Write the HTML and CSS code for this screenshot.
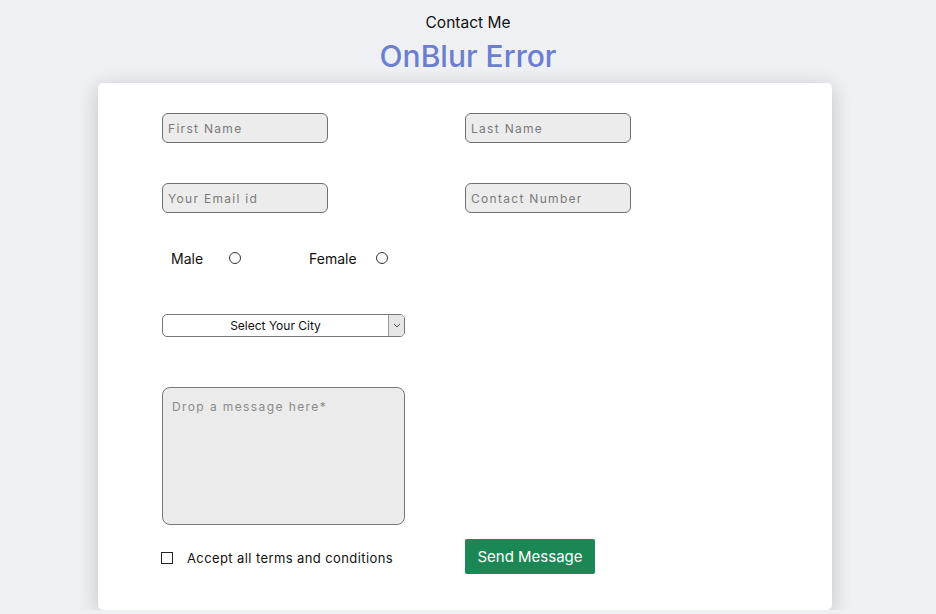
FILE: index.html
```html
<!DOCTYPE html>
<html>
<head>
<meta charset="utf-8">
<link rel="stylesheet" href="styles.css">
</head>
<body>
<header class="head">
  <p class="sub">Contact Me</p>
  <h1 class="title">OnBlur Error</h1>
</header>
<main class="card">
  <div class="row">
    <input class="field" type="text" placeholder="First Name">
    <input class="field" type="text" placeholder="Last Name">
  </div>
  <div class="row row2">
    <input class="field" type="text" placeholder="Your Email id">
    <input class="field" type="text" placeholder="Contact Number">
  </div>
  <div class="gender">
    <label class="opt opt-male">Male <span class="radio"></span></label>
    <label class="opt opt-female">Female <span class="radio"></span></label>
  </div>
  <div class="select">
    <span class="select-text">Select Your City</span>
    <span class="select-arrow">
      <svg width="8" height="5" viewBox="0 0 8 5"><path d="M1 1 L4 4 L7 1" fill="none" stroke="#555" stroke-width="1"/></svg>
    </span>
  </div>
  <textarea class="msg" placeholder="Drop a message here*"></textarea>
  <div class="bottom">
    <label class="terms"><span class="check"></span>Accept all terms and conditions</label>
    <button class="send">Send Message</button>
  </div>
</main>
</body>
</html>
```
FILE: styles.css
```css
* { box-sizing: border-box; }
body {
  margin: 0;
  background: #eff0f4;
  font-family: "Inter", "Noto Sans", sans-serif;
  color: #111;
}
.head { text-align: center; padding-top: 13px; }
.sub { margin: 0; font-size: 15.5px; line-height: 20px; color: #111; }
.title {
  margin: 3px 0 0;
  font-size: 30px;
  line-height: 40px;
  font-weight: 500;
  color: #6b7ed0;
}
.card {
  width: 734px;
  margin: 7px 0 0 98px;
  height: 527px;
  background: #fff;
  border-radius: 5px;
  box-shadow: 0 4px 20px rgba(0,0,0,0.2);
  padding: 30px 0 0 64px;
}
.row { display: flex; gap: 137px; }
.row2 { margin-top: 40px; }
.field {
  width: 166px;
  height: 30px;
  background: #ececec;
  border: 1px solid #707070;
  border-radius: 6px;
  padding: 0 5px;
  font-family: inherit;
  font-size: 12px;
  letter-spacing: 1.3px;
  outline: none;
}
.field::placeholder { color: #7a7a7a; }
.gender { display: flex; margin-top: 37px; height: 16px; align-items: center; }
.opt { display: flex; align-items: center; font-size: 14px; color: #111; }
.opt-male { margin-left: 9px; gap: 26px; }
.opt-female { margin-left: 68px; gap: 19px; }
.radio {
  width: 12px; height: 12px;
  border: 1px solid #333;
  border-radius: 50%;
  display: inline-block;
}
.select {
  margin-top: 48px;
  width: 243px;
  height: 23px;
  border: 1px solid #777;
  border-radius: 5px;
  display: flex;
  align-items: stretch;
  overflow: hidden;
}
.select-text {
  flex: 1;
  text-align: center;
  font-size: 12px;
  line-height: 21px;
  color: #111;
}
.select-arrow {
  width: 16px;
  background: #e6e6e6;
  border-left: 1px solid #999;
  display: flex;
  align-items: center;
  justify-content: center;
}
.msg {
  display: block;
  margin-top: 50px;
  width: 243px;
  height: 138px;
  background: #ebebeb;
  border: 1px solid #777;
  border-radius: 8px;
  padding: 11px 9px;
  font-family: inherit;
  font-size: 12px;
  letter-spacing: 1.4px;
  resize: none;
  outline: none;
}
.msg::placeholder { color: #8a8a8a; }
.bottom { display: flex; align-items: center; margin-top: 14px; }
.terms {
  display: flex; align-items: center;
  width: 303px;
  margin-top: 3px;
  font-size: 13px;
  letter-spacing: 0.4px;
  color: #111;
}
.check {
  width: 12px; height: 12px;
  border: 1px solid #222;
  margin: 0 14px 0 -1px;
  display: inline-block;
}
.send {
  width: 130px;
  height: 35px;
  background: #1b8755;
  color: #fff;
  border: none;
  border-radius: 2px;
  font-family: inherit;
  font-size: 15px;
}
```
